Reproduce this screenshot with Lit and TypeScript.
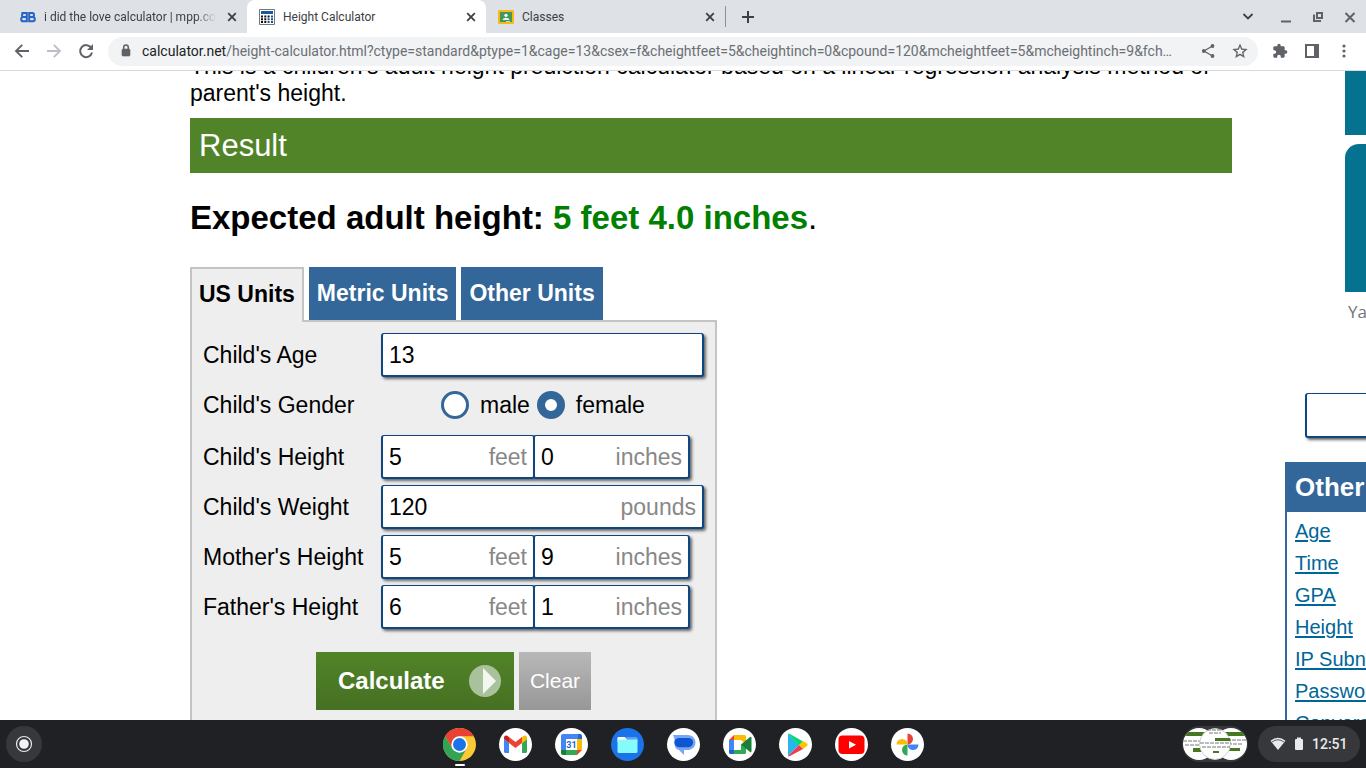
import { LitElement, html, css, TemplateResult } from "lit";
import { customElement, property, state } from "lit/decorators.js";
import { classMap } from "lit/directives/class-map.js";

const glyph = (d: string, size = 16): TemplateResult => html`
  <svg width=${size} height=${size} viewBox="0 0 24 24" fill="currentColor" aria-hidden="true"><path d=${d}></path></svg>`;

const closeGlyph = html`
  <svg width="16" height="16" viewBox="0 0 16 16" fill="none" stroke="currentColor" stroke-width="1.8" aria-hidden="true">
    <path d="M4.2 4.2l7.6 7.6M11.8 4.2l-7.6 7.6"></path>
  </svg>`;

@customElement("browser-bar")
export class BrowserBar extends LitElement {
  static styles = css`
    :host { display: block; flex: none; font-family: Roboto, sans-serif; color: #3c4043; }
    button { border: 0; padding: 0; background: none; color: inherit; font: inherit; display: grid; place-items: center; }
    .strip { display: flex; align-items: stretch; height: 33px; padding-left: 8px; background: #dee1e6; }
    .tab { display: flex; align-items: center; gap: 8px; width: 239px; box-sizing: border-box; padding: 0 7px 0 12px; font-size: 12px; line-height: 16px; }
    .active { background: #fff; border-radius: 8px 8px 0 0; }
    .title { flex: 1; overflow: hidden; white-space: nowrap; }
    .fade { mask-image: linear-gradient(90deg, #000 88%, transparent); }
    .new { width: 45px; border-left: 1px solid #8d9196; margin: 6px 0; }
    .window { display: flex; align-items: center; gap: 16px; margin-left: auto; padding-right: 8px; }
    .menu { margin-right: 6px; }
    .tools { display: flex; align-items: center; height: 36px; padding: 0 14px 1px; border-bottom: 1px solid #d9dadc; background: #fff; color: #5f6368; }
    .nav { display: flex; gap: 16px; width: 94px; }
    .off { color: #bcbfc3; }
    .address { flex: 1; min-width: 0; display: flex; align-items: center; height: 29px; box-sizing: border-box; padding: 0 10px; border-radius: 15px; background: #f1f3f4; }
    .url { flex: 1; min-width: 0; margin: 0 16px 0 8px; overflow: hidden; white-space: nowrap; text-overflow: ellipsis; font-size: 14px; line-height: 20px; color: #6b6f74; }
    .domain { color: #202124; }
    .share { margin-right: 16px; }
    .right { display: flex; gap: 16px; padding-left: 14px; }
  `;

  render() {
    return html`
      <div class="strip">
        <div class="tab">
          <svg width="16" height="16" viewBox="0 0 16 16" fill="none" stroke="#2563c4" stroke-width="2">
            <path d="M1.500 4H6.800V12.300H3Q1.200 12.300 1.200 10.200T3 8.100H6.800M3 8.100Q2 7.800 2 6.200T3.400 4M9.200 3V13.300M8.200 4H12.400Q14 4 14 6T12.400 8.100H9.200M12.600 8.100Q14.800 8.200 14.800 10.200T12.800 12.300H8.200"></path>
          </svg>
          <span class="title fade">i did the love calculator | mpp.community</span>
          <button aria-label="Close tab">${closeGlyph}</button>
        </div>
        <div class="tab active">
          <svg width="16" height="16" viewBox="0 0 16 16">
            <path d="M.5.5h15v15H.5z" fill="#fff" stroke="#777"></path>
            <path d="M2 2h12v3H2z" fill="#1d5a9c"></path>
            <path d="M2 6.500h2v2H2zM5.300 6.500h2v2h-2zM2 9.300h2v2H2zM5.300 9.300h2v2h-2zM8.600 6.500h2v2h-2zM2 12h2v2H2zM5.300 12h2v2h-2z" fill="#111"></path>
            <path d="M12 6.500h2v2h-2zM8.600 9.300h2v2h-2zM12 9.300h2v2h-2zM8.600 12h2v2h-2zM12 12h2v2h-2z" fill="#1d4f8a"></path>
          </svg>
          <span class="title">Height Calculator</span>
          <button aria-label="Close tab">${closeGlyph}</button>
        </div>
        <div class="tab">
          <svg width="16" height="16" viewBox="0 0 16 16">
            <rect y="1" width="16" height="14" rx="1.500" fill="#f5ba15"></rect>
            <path d="M2 3h12v10H2z" fill="#46975a"></path>
            <circle cx="8" cy="6.300" r="1.600" fill="#fff"></circle>
            <path d="M4.500 11q.5-2.300 3.500-2.300t3.500 2.300zM8 12.200h4V13H8z" fill="#e8f3ea"></path>
          </svg>
          <span class="title">Classes</span>
          <button aria-label="Close tab">${closeGlyph}</button>
        </div>
        <button class="new" aria-label="New tab">
          <svg width="14" height="14" viewBox="0 0 14 14" stroke="currentColor" stroke-width="2"><path d="M7 1v12M1 7h12"></path></svg>
        </button>
        <div class="window">
          <button class="menu" aria-label="Search tabs">
            <svg width="16" height="16" viewBox="0 0 16 16" fill="none" stroke="currentColor" stroke-width="1.800"><path d="M3.500 5L8 9.500l4.500-4.500"></path></svg>
          </button>
          <button aria-label="Minimize">
            <svg width="16" height="16" viewBox="0 0 16 16" fill="#5f6368"><path d="M3 11.500h10v2H3z"></path></svg>
          </button>
          <button aria-label="Restore">
            <svg width="16" height="16" viewBox="0 0 16 16" fill="none" stroke="#5f6368" stroke-width="2"><path d="M7 4h5v5H7zM4 5.500V12h7"></path></svg>
          </button>
          <button aria-label="Close window">
            <svg width="16" height="16" viewBox="0 0 16 16" stroke="#5f6368" stroke-width="2"><path d="M3.500 4l9 9M12.500 4l-9 9"></path></svg>
          </button>
        </div>
      </div>
      <div class="tools">
        <div class="nav">
          <button aria-label="Back">
            <svg width="16" height="16" viewBox="0 0 16 16" fill="none" stroke="currentColor" stroke-width="1.900"><path d="M15 8H2.500M8.200 1.800L2 8l6.200 6.200"></path></svg>
          </button>
          <button class="off" aria-label="Forward" disabled>
            <svg width="16" height="16" viewBox="0 0 16 16" fill="none" stroke="currentColor" stroke-width="1.900"><path d="M1 8h12.500M7.800 1.800L14 8l-6.200 6.200"></path></svg>
          </button>
          <button aria-label="Reload">
            <svg width="16" height="16" viewBox="0 0 16 16"><path d="M13.300 5A6 6 0 1 0 14 9.500" fill="none" stroke="currentColor" stroke-width="2"></path><path d="M15 1v6H9z" fill="currentColor"></path></svg>
          </button>
        </div>
        <div class="address">
          <svg width="16" height="16" viewBox="0 0 16 16"><path d="M5 6h6q1 0 1 1v5q0 1-1 1H5q-1 0-1-1V7q0-1 1-1z" fill="currentColor" stroke="currentColor" stroke-width=".6"></path><path d="M5.700 6V4.400a2.300 2.300 0 0 1 4.600 0V6" fill="none" stroke="currentColor" stroke-width="1.500"></path></svg>
          <div class="url" role="textbox" aria-label="Address" tabindex="0"><span class="domain">calculator.net</span>/height-calculator.html?ctype=standard&amp;ptype=1&amp;cage=13&amp;csex=f&amp;cheightfeet=5&amp;cheightinch=0&amp;cpound=120&amp;mcheightfeet=5&amp;mcheightinch=9&amp;fch…</div>
          <button class="share" aria-label="Share">
            <svg width="16" height="16" viewBox="0 0 16 16" fill="currentColor"><path d="M12.500 3L4 8l8.500 5" fill="none" stroke="currentColor" stroke-width="1.300"></path><circle cx="12.500" cy="3" r="1.900"></circle><circle cx="3.800" cy="8" r="1.900"></circle><circle cx="12.500" cy="13" r="1.900"></circle></svg>
          </button>
          <button aria-label="Bookmark">${glyph("M23.500 9.100l-8.270-.71L12 .8 8.770 8.400.5 9.100l6.280 5.440L4.900 22.600 12 18.340l7.100 4.260-1.880-8.070L23.500 9.100zM12 15.800l-4.100 2.470 1.090-4.660-3.620-3.140 4.770-.41L12 5.660l1.860 4.400 4.770.41-3.620 3.140 1.090 4.660L12 15.800z")}</button>
        </div>
        <div class="right">
          <button aria-label="Extensions">${glyph("M20.500 11H19V7c0-1.100-.9-2-2-2h-4V3.500a2.500 2.500 0 0 0-5 0V5H4c-1.100 0-2 .9-2 2v3.800h1.500c1.490 0 2.700 1.210 2.700 2.700s-1.210 2.700-2.700 2.700H2V20c0 1.100.9 2 2 2h3.800v-1.500c0-1.490 1.210-2.700 2.700-2.700s2.700 1.210 2.700 2.700V22H17c1.100 0 2-.9 2-2v-4h1.500a2.500 2.500 0 0 0 0-5z")}</button>
          <button aria-label="Side panel">
            <svg width="16" height="16" viewBox="0 0 16 16" fill="currentColor"><path fill-rule="evenodd" d="M1 1h14v14H1zM3 3v10h7V3z"></path></svg>
          </button>
          <button aria-label="Menu">
            <svg width="16" height="16" viewBox="0 0 16 16" fill="currentColor"><circle cx="8" cy="3" r="1.600"></circle><circle cx="8" cy="8" r="1.600"></circle><circle cx="8" cy="13" r="1.600"></circle></svg>
          </button>
        </div>
      </div>`;
  }
}

@customElement("unit-field")
export class UnitField extends LitElement {
  @property() label = "";
  @property() value = "";
  @property() unit = "";

  static styles = css`
    :host { display: block; position: relative; }
    .box { display: block; width: 100%; height: 44px; box-sizing: border-box; padding: 1px 6px 0; border: 2px solid #0e4682; border-top-width: 1px; border-radius: 3px; background: #fff; box-shadow: 2px 2px 3px #666; font: 23px "Liberation Sans", Arial, sans-serif; color: #000; outline: 0; }
    .unit { position: absolute; right: 8px; top: 8px; line-height: 28px; color: #888; pointer-events: none; }
  `;

  render() {
    return html`<input class="box" aria-label=${this.label} .value=${this.value} />
      ${this.unit ? html`<span class="unit">${this.unit}</span>` : ""}`;
  }
}

@customElement("height-form")
export class HeightForm extends LitElement {
  @state() private gender = "female";

  static styles = css`
    :host { display: block; width: 527px; }
    .tabs { display: flex; gap: 5px; }
    .tab { height: 53px; border: 0; padding: 0 8px; background: #336699; color: #fff; font: bold 23px/53px "Liberation Sans", Arial, sans-serif; display: block; }
    .current { height: 55px; margin-bottom: -2px; padding: 0 7px 4px; border: 2px solid #c4c4c4; border-bottom: 0; background: #eee; color: #000; z-index: 1; line-height: 48px; }
    .panel { border: 2px solid #c4c4c4; background: #eee; padding: 11px 11px 30px; }
    .rows { display: grid; grid-template-columns: 178px 1fr; gap: 6px 0; align-items: center; }
    .pair { display: grid; grid-template-columns: 152px 157px; }
    .feet { width: 154px; }
    .gender { padding-bottom: 2px; }
    .radios { display: flex; align-items: center; gap: 7px; height: 44px; padding-left: 60px; }
    .choice { display: flex; align-items: center; gap: 11px; }
    .radio { appearance: none; width: 28px; height: 28px; margin: 0; box-sizing: border-box; border: 3px solid #336699; border-radius: 50%; background: #fff; }
    .radio:checked { border-width: 8px; }
    .actions { display: flex; justify-content: center; gap: 5px; padding-top: 23px; }
    .calculate, .clear { height: 58px; border: 0; color: #fff; font-family: "Liberation Sans", Arial, sans-serif; }
    .calculate { display: flex; align-items: center; justify-content: space-between; width: 198px; padding: 0 12px 0 22px; background: linear-gradient(#518428, #467022); font-size: 24px; font-weight: bold; }
    .clear { width: 72px; padding: 0; background: linear-gradient(#b8b8b8, #979797); font-size: 21px; }
  `;

  private pair(label: string, feet: string, inches: string) {
    return html`<span>${label}</span>
      <div class="pair">
        <unit-field class="feet" .label=${label + " feet"} .value=${feet} .unit=${"feet"}></unit-field>
        <unit-field .label=${label + " inches"} .value=${inches} .unit=${"inches"}></unit-field>
      </div>`;
  }

  render() {
    return html`
      <div class="tabs">
        ${["US Units", "Metric Units", "Other Units"].map((name, i) => html`
          <button class=${classMap({ tab: true, current: i === 0 })}>${name}</button>`)}
      </div>
      <form class="panel" @submit=${(e: Event) => e.preventDefault()}>
        <div class="rows">
          <span>Child's Age</span>
          <unit-field .label=${"Child's Age"} .value=${"13"}></unit-field>
          <span class="gender">Child's Gender</span>
          <div class="gender radios">
            ${["male", "female"].map((g) => html`
              <label class="choice"><input class="radio" type="radio" name="gender" .checked=${this.gender === g} @change=${() => (this.gender = g)} />${g}</label>`)}
          </div>
          ${this.pair("Child's Height", "5", "0")}
          <span>Child's Weight</span>
          <unit-field .label=${"Child's Weight"} .value=${"120"} .unit=${"pounds"}></unit-field>
          ${this.pair("Mother's Height", "5", "9")}
          ${this.pair("Father's Height", "6", "1")}
        </div>
        <div class="actions">
          <button class="calculate">Calculate
            <svg width="34" height="34" viewBox="0 0 34 34"><circle cx="17" cy="17" r="16" fill="#aac29c"></circle><path d="M15 4l13 13-13 13z" fill="#f3f7f0"></path></svg>
          </button>
          <button class="clear" type="reset">Clear</button>
        </div>
      </form>`;
  }
}

const apps: { name: string; art: TemplateResult }[] = [
  { name: "Chrome", art: html`<svg width="33" height="33" viewBox="0 0 33 33">
      <circle cx="16.500" cy="16.500" r="16.500" fill="#fbc934"></circle>
      <path d="M2.200 8.250A16.500 16.500 0 0 1 30.800 8.250H16.500L9.350 20.600z" fill="#e94235"></path>
      <path d="M2.200 8.250A16.500 16.500 0 0 0 16.500 33l7.150-12.400H9.350z" fill="#34a353"></path>
      <circle cx="16.500" cy="16.500" r="8.200" fill="#fff"></circle><circle cx="16.500" cy="16.500" r="6.500" fill="#1a73e8"></circle></svg>` },
  { name: "Gmail", art: html`<svg width="33" height="33" viewBox="0 0 33 33"><circle cx="16.500" cy="16.500" r="16.500" fill="#fff"></circle>
      <path d="M5 11l5 4v10H6.500Q5 25 5 23.500z" fill="#4285f4"></path><path d="M28 11l-5 4v10h3.500q1.500 0 1.500-1.500z" fill="#34a853"></path>
      <path d="M10 9l6.500 5L23 9v6l-6.500 5L10 15z" fill="#ea4335"></path><path d="M5 11V9.500Q5.600 6 10 9v6z" fill="#c5221f"></path><path d="M28 11V9.500Q27.400 6 23 9v6z" fill="#fbbc04"></path></svg>` },
  { name: "Calendar", art: html`<svg width="33" height="33" viewBox="0 0 33 33"><circle cx="16.500" cy="16.500" r="16.500" fill="#fff"></circle>
      <path d="M8 6h15v5H11v11H6V8q0-2 2-2z" fill="#4285f4"></path><path d="M23 6h2q2 0 2 2v3h-4z" fill="#1967d2"></path><path d="M22 11h5v11h-5z" fill="#fbbc04"></path>
      <path d="M6 22h5v5H8q-2 0-2-2z" fill="#188038"></path><path d="M11 22h11v5H11z" fill="#34a853"></path><path d="M22 22h5l-5 5z" fill="#ea4335"></path><path d="M11 11h11v11H11z" fill="#fff"></path>
      <text x="16.500" y="20" text-anchor="middle" font-family="Roboto, sans-serif" font-size="9" font-weight="bold" fill="#1967d2">31</text></svg>` },
  { name: "Files", art: html`<svg width="33" height="33" viewBox="0 0 33 33"><circle cx="16.500" cy="16.500" r="16.500" fill="#1a73e8"></circle>
      <path d="M15 9h10q1.500 0 1.500 1.500V14H13z" fill="#669df6"></path><path d="M6.500 10.500Q6.500 9 8 9h5.500l2 2v3h-9z" fill="#fff"></path><path d="M6.500 11.500h20v12Q26.500 25 25 25H8q-1.500 0-1.500-1.500z" fill="#85fbfb"></path><path d="M7 9h6.500l2 2.500h-9z" fill="#fff"></path></svg>` },
  { name: "Messages", art: html`<svg width="33" height="33" viewBox="0 0 33 33"><circle cx="16.500" cy="16.500" r="16.500" fill="#fff"></circle>
      <path d="M6 7h14.500a7.500 7.500 0 0 1 1 15H17v5l-5-5q-4.500-1-4.500-7V11z" fill="#78a5f8"></path>
      <path d="M12 10h9.500a4.600 4.600 0 0 1 0 9.200H12A4.600 4.600 0 0 1 12 10z" fill="#0b57d0"></path></svg>` },
  { name: "Meet", art: html`<svg width="33" height="33" viewBox="0 0 33 33"><circle cx="16.500" cy="16.500" r="16.500" fill="#fff"></circle>
      <path d="M6 12l5-5v5z" fill="#ea4335"></path><path d="M11 7h10.500Q23 7 23 8.500V16l-5-4h-7z" fill="#fbbc04"></path><path d="M6 12h5v10H6z" fill="#4285f4"></path><path d="M6 22h5v4H7.500Q6 26 6 24.500z" fill="#1967d2"></path>
      <path d="M11 22h7v-5.500h5v8q0 1.500-1.500 1.500H11z" fill="#34a853"></path><path d="M18 16.500L27 9q1.500-.8 1.500 1v13q0 1.800-1.500 1z" fill="#188038"></path></svg>` },
  { name: "Play Store", art: html`<svg width="33" height="33" viewBox="0 0 33 33"><circle cx="16.500" cy="16.500" r="16.500" fill="#fff"></circle>
      <path d="M9 6v22l11-11z" fill="#29b6e8"></path><path d="M9 6q.5-1 2 0l13 7.500-4 4z" fill="#00d977"></path><path d="M24 13l4 2.500q1.500 1.200 0 2.500l-4 3-4-4z" fill="#ffc400"></path><path d="M9 28l11-11 4 4-13 7q-1.500.8-2 0z" fill="#ed3b51"></path></svg>` },
  { name: "YouTube", art: html`<svg width="33" height="33" viewBox="0 0 33 33"><circle cx="16.500" cy="16.500" r="16.500" fill="#fff"></circle>
      <rect x="3.500" y="7.500" width="26" height="18.500" rx="4" fill="#f00"></rect><path d="M14 13l7 3.800-7 3.800z" fill="#fff"></path></svg>` },
  { name: "Photos", art: html`<svg width="33" height="33" viewBox="0 0 33 33"><circle cx="16.500" cy="16.500" r="16.500" fill="#fff"></circle>
      <path d="M16.500 5.500a5.500 5.500 0 0 1 0 11z" fill="#ea4335"></path><path d="M27.500 16.500a5.500 5.500 0 0 1-11 0z" fill="#4285f4"></path><path d="M16.500 27.500a5.500 5.500 0 0 1 0-11z" fill="#34a853"></path><path d="M5.500 16.500a5.500 5.500 0 0 1 11 0z" fill="#fbbc04"></path></svg>` },
];

@customElement("system-shelf")
export class SystemShelf extends LitElement {
  static styles = css`
    :host { display: grid; grid-template-columns: 1fr auto 1fr; align-items: center; flex: none; height: 48px; padding: 0 6px; background: #202124; font-family: Roboto, sans-serif; color: #e8eaed; }
    button { border: 0; padding: 0; background: none; color: inherit; font: inherit; }
    .launcher { width: 36px; height: 36px; border-radius: 50%; background: #37383b; display: grid; place-items: center; }
    .apps { display: flex; gap: 23px; }
    .app { position: relative; width: 33px; height: 33px; }
    .app svg { display: block; }
    .running::after { content: ""; position: absolute; left: 12px; top: 36px; width: 10px; height: 2px; border-radius: 1px; background: #fff; }
    .end { display: flex; justify-content: flex-end; align-items: center; gap: 10px; }
    .recent svg { display: block; }
    .tray { display: flex; align-items: center; width: 102px; height: 36px; box-sizing: border-box; padding: 0 8px 0 12px; gap: 5px; border-radius: 18px; background: #37383b; font-size: 14px; line-height: 20px; font-weight: 500; }
    .tray svg { flex: none; }
  `;

  render() {
    return html`
      <div>
        <button class="launcher" aria-label="Launcher"><svg width="18" height="18" viewBox="0 0 18 18"><circle cx="9" cy="9" r="7.500" fill="none" stroke="#e8eaed" stroke-width="1.200"></circle><circle cx="9" cy="9" r="4.800" fill="#f1f3f4"></circle></svg></button>
      </div>
      <nav class="apps">
        ${apps.map((a, i) => html`<button class=${classMap({ app: true, running: i === 0 })} aria-label=${a.name}>${a.art}</button>`)}
      </nav>
      <div class="end">
        <button class="recent" aria-label="Recent screen captures">
          <svg width="66" height="36" viewBox="0 0 66 36">
            <defs>
              <clipPath id="side"><circle cx="17" cy="18" r="16"></circle><circle cx="49" cy="18" r="16"></circle></clipPath>
              <clipPath id="mid"><circle cx="33" cy="18" r="16"></circle></clipPath>
            </defs>
            <rect width="66" height="36" rx="18" fill="#37383b"></rect>
            <g clip-path="url(#side)">
              <path d="M0 0h66v36H0z" fill="#fff"></path>
              <path d="M3 6h27v4H3zM40 6h24v4H40zM11 22h14v4H11zM46 22h12v3H46z" fill="#47781f"></path>
              <path d="M1 15h28M45 14h20M3 19h26M46 18h14" stroke="#777" stroke-dasharray="4 1"></path>
            </g>
            <g clip-path="url(#mid)">
              <circle cx="33" cy="18" r="15.500" fill="#fff" stroke="#ccc"></circle>
              <path d="M33 12h17v3H33zM31 25h6v2h-6z" fill="#47781f"></path>
              <path d="M25 4h14M27 7h12M18 17h31M20 21h28" stroke="#777" stroke-dasharray="4 1"></path>
            </g>
          </svg>
        </button>
        <button class="tray" aria-label="Status tray">
          <svg width="16" height="16" viewBox="0 0 16 16" fill="currentColor"><path d="M8 14L.5 4.700Q8-1 15.500 4.700z"></path><path d="M2 6Q8 1.500 14 6" fill="none" stroke="#37383b" stroke-width=".8"></path></svg>
          <svg width="16" height="16" viewBox="0 0 16 16" fill="currentColor"><path d="M6 1.500h4V3h1q1 0 1 1v9q0 1-1 1H5q-1 0-1-1V4q0-1 1-1h1z"></path></svg>
          <span>12:51</span>
        </button>
      </div>`;
  }
}

@customElement("app-root")
export class AppRoot extends LitElement {
  static styles = css`
    :host { display: flex; flex-direction: column; height: 100vh; overflow: hidden; background: #fff; color: #000; font: 23px/27px "Liberation Sans", Arial, sans-serif; }
    .page { flex: 1; min-height: 0; overflow: hidden; display: grid; grid-template-columns: 1fr 81px; gap: 53px; padding-left: 190px; }
    .intro { margin: -18px 0 11px; }
    .result { margin: 0; padding: 0 9px; background: #518428; color: #fff; font-size: 31px; font-weight: normal; line-height: 55px; }
    .answer { margin: 26px 0 30px; font-size: 33px; line-height: 38px; }
    .value { color: #008000; }
    .side { white-space: nowrap; }
    .ad { display: grid; gap: 9px; padding-left: 60px; color: #757575; font: 17px/22px "Open Sans", sans-serif; }
    .banner { height: 64px; background: #05738f; }
    .card { height: 148px; border-radius: 14px 0 0 0; background: #05738f; }
    .sponsor { padding-left: 3px; }
    .search { display: block; width: 200px; height: 45px; box-sizing: border-box; margin: 70px 0 24px 20px; border: 2px solid #0e4682; border-top-width: 1px; border-radius: 3px; box-shadow: 2px 2px 3px #666; font: inherit; }
    .others { width: 260px; border: 2px solid #336699; border-right: 0; font-size: 20px; line-height: 32px; }
    .heading { margin: 0; padding: 0 8px 2px; background: #336699; color: #fff; font-size: 26px; line-height: 46px; }
    .links { display: grid; justify-items: start; padding: 3px 8px; }
    .link { color: #006699; text-decoration: underline; text-underline-offset: 2px; }
  `;

  render() {
    const links = ["Age", "Time", "GPA", "Height", "IP Subnet", "Password Generator", "Conversion", "More Calculators"];
    return html`
      <browser-bar></browser-bar>
      <div class="page">
        <main>
          <p class="intro">This is a children's adult height prediction calculator based on a linear regression analysis method of parent's height.</p>
          <h2 class="result">Result</h2>
          <p class="answer"><b>Expected adult height: <span class="value">5 feet 4.0 inches</span></b>.</p>
          <height-form></height-form>
        </main>
        <aside class="side">
          <div class="ad">
            <div class="banner"></div>
            <div class="card"></div>
            <span class="sponsor">Ya</span>
          </div>
          <input class="search" type="text" aria-label="Search calculators" />
          <section class="others">
            <h3 class="heading">Other Calculators</h3>
            <nav class="links">${links.map((l) => html`<a class="link" href="#">${l}</a>`)}</nav>
          </section>
        </aside>
      </div>
      <system-shelf></system-shelf>`;
  }
}
